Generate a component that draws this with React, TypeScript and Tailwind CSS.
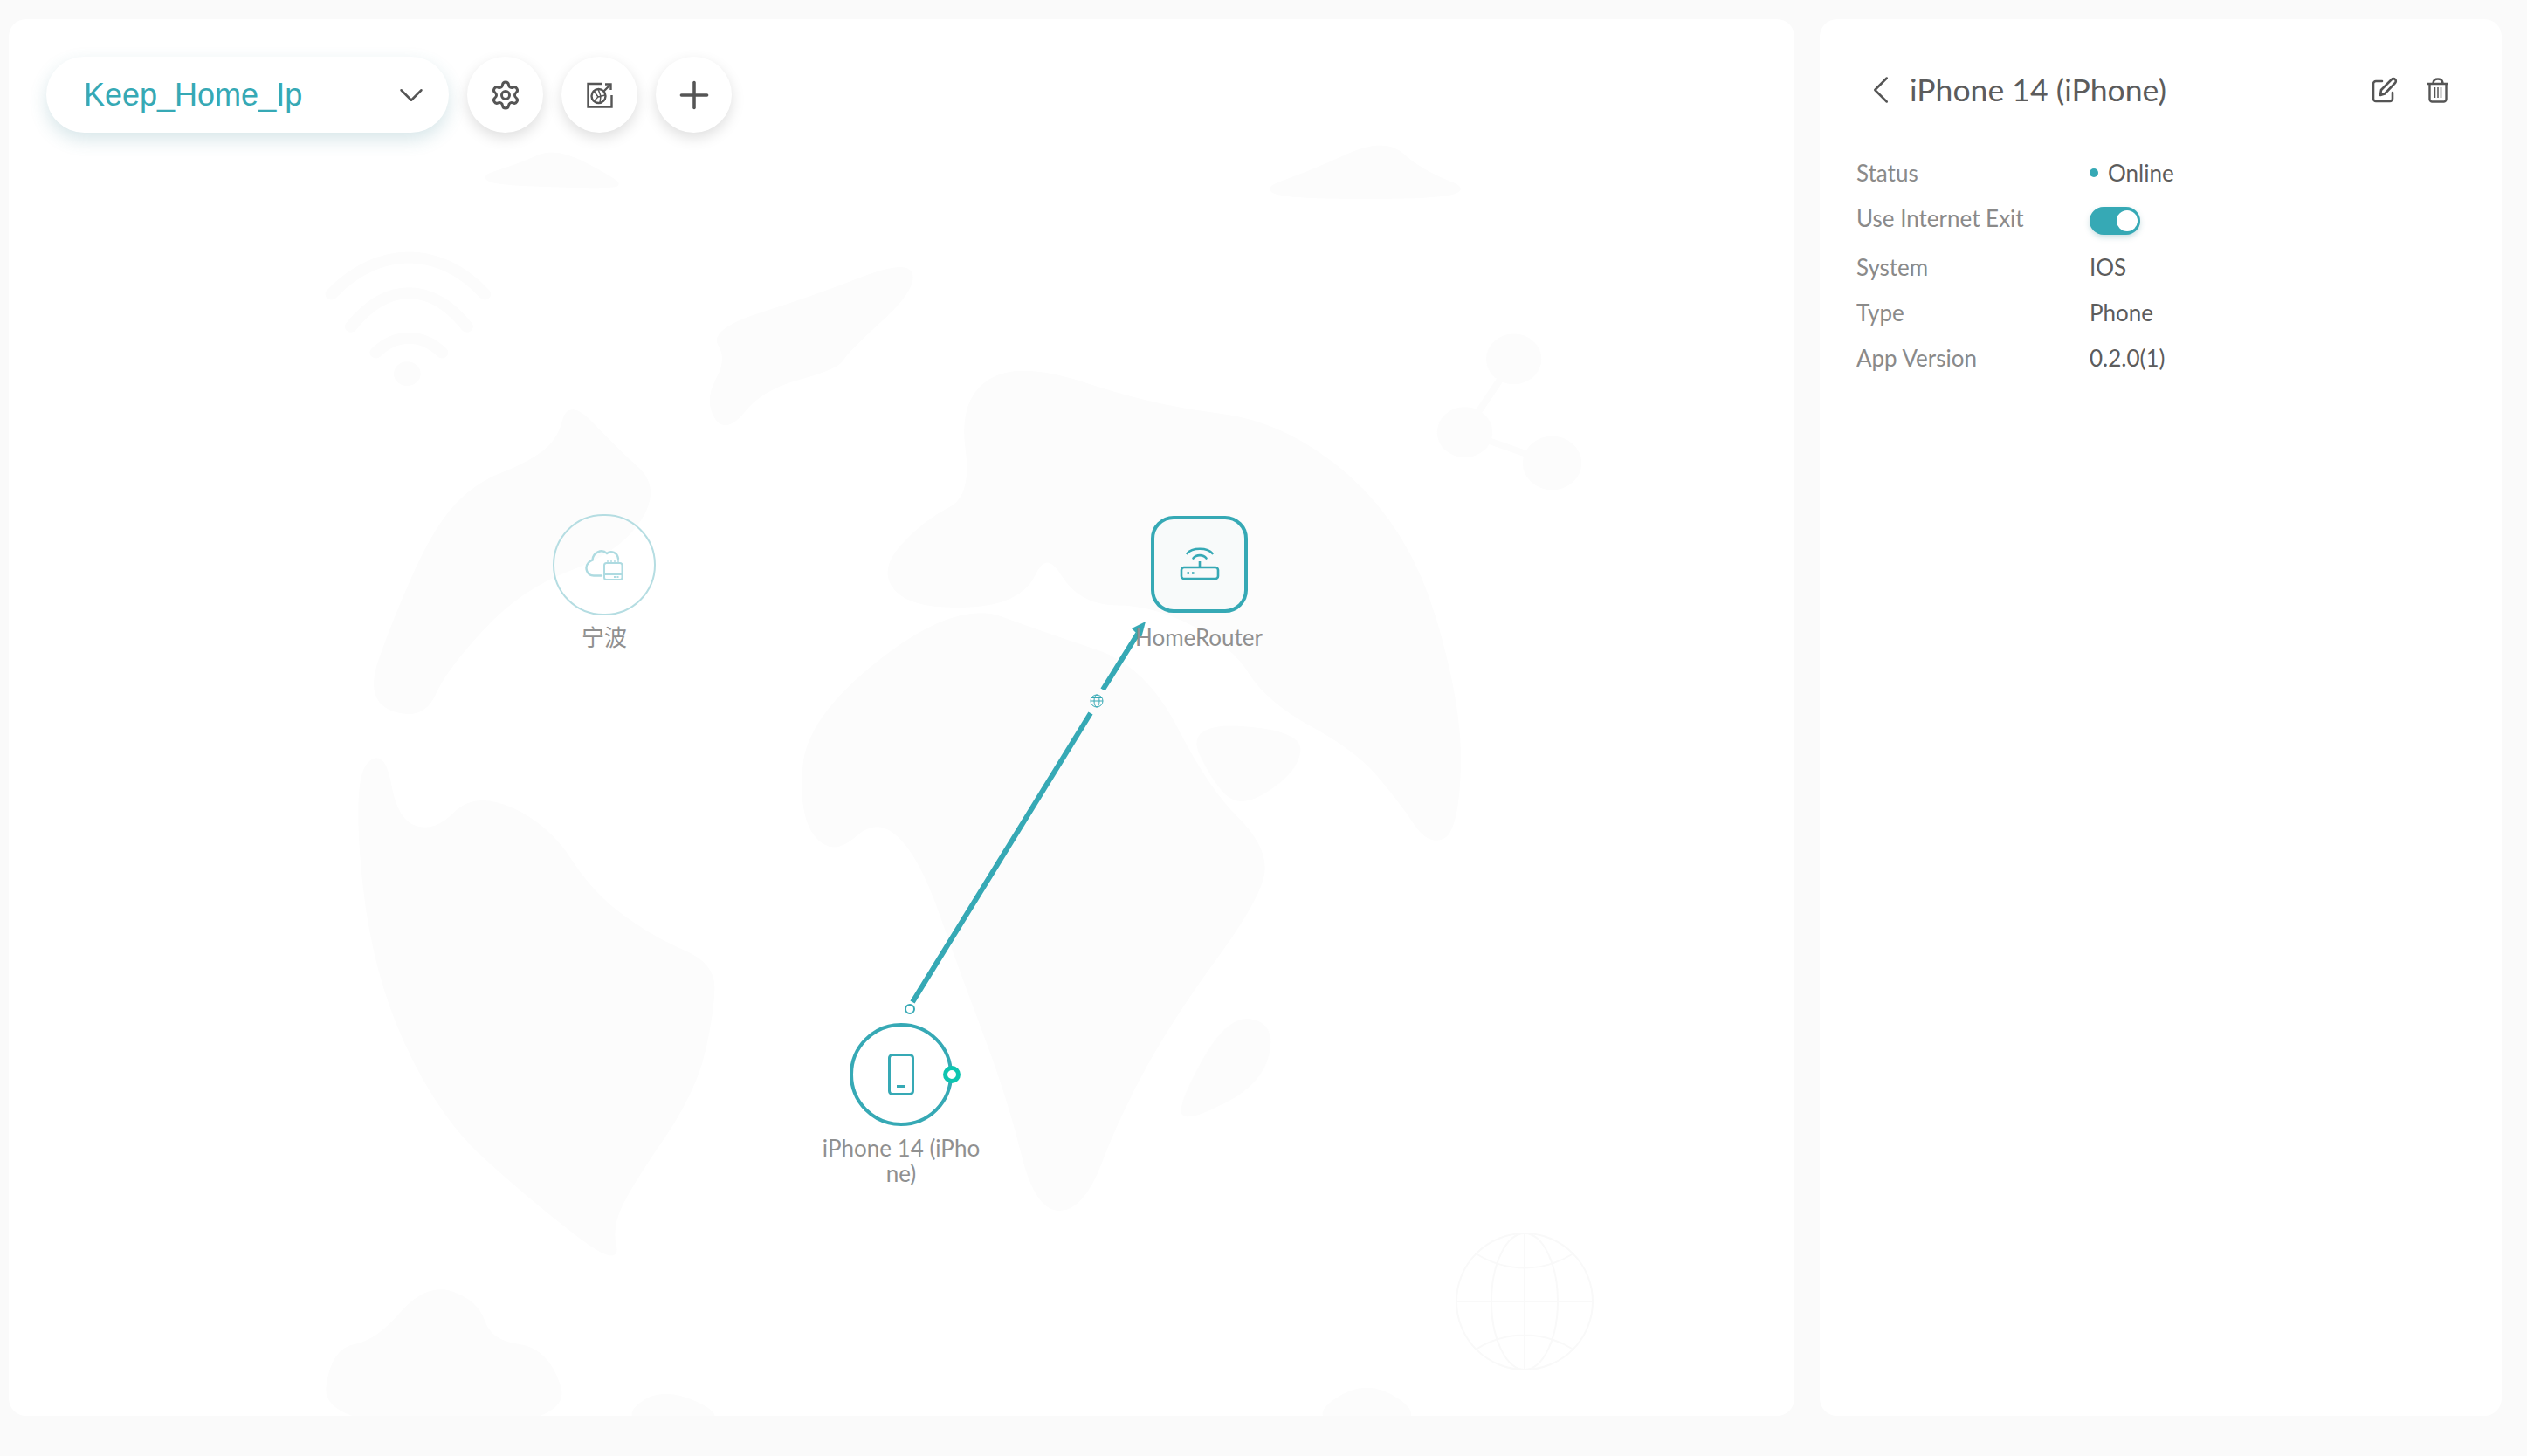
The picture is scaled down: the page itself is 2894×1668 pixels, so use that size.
import { Settings, Plus, ChevronDown, ChevronLeft } from 'lucide-react'

const font = "font-['Lato','Noto_Sans_CJK_SC',sans-serif]"

const rows = [
  { label: 'System', value: 'IOS' },
  { label: 'Type', value: 'Phone' },
  { label: 'App Version', value: '0.2.0(1)' },
]

// rounds a list of points off into a closed blob
function blob(points: number[][]) {
  let d = ''
  points.forEach((p, i) => {
    const next = points[(i + 1) % points.length]
    const mx = (p[0] + next[0]) / 2
    const my = (p[1] + next[1]) / 2
    if (i === 0) {
      const last = points[points.length - 1]
      d += `M${(last[0] + p[0]) / 2} ${(last[1] + p[1]) / 2} `
    }
    d += `Q${p[0]} ${p[1]} ${mx} ${my} `
  })
  return d + 'Z'
}

const continents = [
  [[345, 322], [335, 370], [300, 400], [240, 425], [195, 480], [150, 590], [118, 690], [180, 712], [205, 650], [290, 550], [400, 505], [445, 430], [395, 380]],
  [[105, 790], [135, 750], [150, 840], [195, 855], [240, 805], [320, 845], [370, 930], [440, 985], [505, 1015], [505, 1070], [485, 1170], [410, 1290], [390, 1340], [400, 1385], [300, 1300], [200, 1200], [125, 1020]],
  [[505, 235], [620, 195], [725, 150], [730, 185], [655, 260], [645, 280], [560, 305], [520, 360], [500, 320], [525, 270]],
  [[695, 530], [745, 470], [800, 440], [785, 320], [850, 275], [1000, 330], [1150, 350], [1285, 480], [1345, 700], [1340, 850], [1310, 865], [1280, 815], [1230, 750], [1130, 690], [1090, 620], [1000, 570], [920, 570], [880, 500], [850, 570], [730, 575]],
  [[615, 710], [780, 570], [880, 610], [990, 650], [1060, 800], [1125, 870], [1120, 930], [1020, 1080], [960, 1200], [920, 1315], [870, 1315], [840, 1180], [785, 1020], [740, 880], [690, 830], [640, 880], [605, 830]],
  [[1085, 1080], [1135, 1090], [1120, 1160], [1040, 1205], [1030, 1190]],
  [[1040, 720], [1165, 730], [1160, 775], [1100, 820], [1070, 790]],
  [[232, 52], [290, 32], [330, 12], [395, 50], [400, 58]],
  [[1105, 70], [1180, 40], [1260, 0], [1300, 40], [1370, 70]],
  [[70, 1580], [80, 1490], [130, 1480], [185, 1410], [240, 1430], [255, 1480], [320, 1490], [345, 1580]],
  [[400, 1580], [450, 1535], [530, 1580]],
  [[1170, 1580], [1240, 1525], [1310, 1580]],
]

function WorldMap() {
  return (
    <svg className="absolute inset-0 h-full w-full" viewBox="10 22 2045 1600">
      <g transform="translate(300 160) scale(1.0204 0.931)" fill="#fcfcfc" stroke="#fcfcfc" strokeWidth="6" strokeLinejoin="round">
        {continents.map((c, i) => (
          <path key={i} d={blob(c)} />
        ))}
        <circle cx="1405" cy="270" r="28" />
        <circle cx="1350" cy="360" r="28" />
        <circle cx="1448" cy="398" r="30" />
        <circle cx="163" cy="288" r="12" />
      </g>
      <g transform="translate(300 160) scale(1.0204 0.931)" fill="none" stroke="#fcfcfc" strokeLinecap="round">
        <path d="M1405 270 L1350 360 L1448 398" strokeWidth="8" />
        <path d="M78 190 C130 130 200 130 250 190" strokeWidth="14" />
        <path d="M100 230 C140 175 190 175 230 230" strokeWidth="14" />
        <path d="M128 262 C150 238 180 238 202 262" strokeWidth="14" />
      </g>
      <g fill="none" stroke="#f9f9f9" strokeWidth="2">
        <circle cx="1746" cy="1491" r="78" />
        <ellipse cx="1746" cy="1491" rx="38" ry="78" />
        <path d="M1668 1491 H1824 M1690 1436 C1725 1458 1767 1458 1802 1436 M1690 1546 C1725 1524 1767 1524 1802 1546 M1746 1413 V1569" />
      </g>
    </svg>
  )
}

function CloudIcon() {
  return (
    <svg width="44" height="36" viewBox="0 0 44 36" fill="none" stroke="#aedbe1" strokeWidth="2.4">
      <path d="M19 30.5 H10 C2 30.5 -1 21 4 15.5 C5.5 14 7 13 8.5 12.5 C9 4 19 -1 25 5 C30 1 37 4 38 11" strokeLinecap="round" />
      <rect x="22" y="16" width="20.5" height="19" rx="2.5" strokeWidth="2" />
      <path d="M26 16 V13 M30 16 V13 M34 16 V13 M38 16 V13" strokeWidth="1.4" />
      <path d="M22 29 H42" strokeWidth="2" />
      <path d="M33 32 H40" strokeWidth="2" strokeDasharray="2 1.5" />
    </svg>
  )
}

function RouterIcon() {
  return (
    <svg className="mb-[3px]" width="46" height="40" viewBox="0 0 46 40" fill="none" stroke="#36a9b5" strokeWidth="2.6">
      <path d="M8.5 9 C14 2 32 2 37.5 9" strokeLinecap="round" />
      <path d="M15.5 14.5 C19 10 27 10 30.5 14.5" strokeLinecap="round" />
      <path d="M23 18 V25" />
      <rect x="2" y="25" width="42" height="13" rx="3" />
      <path d="M8.5 31.5 H11 M14 31.5 H16.5" />
    </svg>
  )
}

function ExportIcon() {
  return (
    <svg width="30" height="30" viewBox="0 0 30 30" fill="none" stroke="#555555" strokeWidth="2.4">
      <path d="M17 2 H1.5 V28.5 H28.5 V15" />
      <path d="M19 11 L27 3 M21 2.5 H27.5 V9" />
      <circle cx="13.5" cy="16" r="8" />
      <path d="M8 10 L13 17 L8 22 M13 17 L21 15 M13 8 L16 16 L15 24" strokeWidth="1.5" />
    </svg>
  )
}

function EditIcon() {
  return (
    <svg width="30" height="30" viewBox="0 0 30 30" fill="none" stroke="#555555" strokeWidth="2.6" strokeLinecap="round" strokeLinejoin="round">
      <path d="M12 5 H5 a3 3 0 0 0 -3 3 V25 a3 3 0 0 0 3 3 H21 a3 3 0 0 0 3 -3 V18" />
      <path d="M10 21 L11 15 L23 3 a2.6 2.6 0 0 1 4 4 L15 19.5 Z" />
    </svg>
  )
}

function TrashIcon() {
  return (
    <svg width="26" height="29" viewBox="0 0 26 29" fill="none" stroke="#555555" strokeWidth="2.4">
      <path d="M1 7 H25 M7.5 6 C8 2.5 9.5 1.5 13 1.5 C16.5 1.5 18 2.5 18.5 6" />
      <path d="M3.5 7 V24.5 C3.5 26 4.5 27.5 6 27.5 H20 C21.5 27.5 22.5 26 22.5 24.5 V7" />
      <path d="M9.5 11 V23 M13 11 V23 M16.5 11 V23" strokeWidth="1.5" />
    </svg>
  )
}

function GlobeIcon() {
  return (
    <svg width="16" height="16" viewBox="0 0 16 16" fill="none" stroke="#36a9b5" strokeWidth="1">
      <circle cx="8" cy="8" r="7" />
      <ellipse cx="8" cy="8" rx="3" ry="7" />
      <path d="M1 8 H15 M2 4.5 H14 M2 11.5 H14" />
    </svg>
  )
}

function RoundButton({ children }: { children: React.ReactNode }) {
  return (
    <button className="flex h-[87px] w-[87px] items-center justify-center rounded-full bg-white shadow-[0_6px_16px_rgba(0,0,0,0.13)]">
      {children}
    </button>
  )
}

export default function App() {
  return (
    <div className={`flex h-[1668px] w-[2894px] gap-[29px] bg-[#fafafa] pb-[46px] pl-[10px] pr-[29px] pt-[22px] ${font}`}>
      <div className="relative w-[2045px] overflow-hidden rounded-[20px] bg-white">
        <WorldMap />

        {/* toolbar */}
        <div className="absolute left-[43px] top-[43px] flex gap-[21px]">
          <div className="flex h-[87px] w-[461px] items-center justify-between rounded-full bg-white pl-[43px] pr-[20px] shadow-[0_8px_20px_rgba(54,130,145,0.2)]">
            <span className="font-['Liberation_Sans',sans-serif] text-[36px] text-[#36a9b5]">Keep_Home_Ip</span>
            <ChevronDown size={46} color="#555555" strokeWidth={1.3} />
          </div>
          <RoundButton>
            <Settings size={36} color="#555555" strokeWidth={2} />
          </RoundButton>
          <RoundButton>
            <ExportIcon />
          </RoundButton>
          <RoundButton>
            <Plus size={50} color="#555555" strokeWidth={1.7} />
          </RoundButton>
        </div>

        {/* link between the nodes */}
        <svg className="absolute inset-0 h-full w-full" viewBox="10 22 2045 1600">
          <path d="M1045 1148 L1249 817 M1263 790 L1303 726" stroke="#36a9b5" strokeWidth="6" fill="none" />
          <path d="M1312 712 L1296 720 L1307 731 Z" fill="#36a9b5" />
          <circle cx="1042" cy="1156" r="5" fill="white" stroke="#36a9b5" strokeWidth="2" />
        </svg>
        <div className="absolute left-[1238px] top-[773px] flex h-[16px] w-[16px] items-center justify-center">
          <GlobeIcon />
        </div>

        {/* nodes */}
        <div className="absolute left-[623px] top-[567px] flex h-[116px] w-[118px] items-center justify-center rounded-full border-2 border-[#b5dde2]">
          <CloudIcon />
        </div>
        <div className="absolute left-[582px] top-[693px] w-[200px] text-center text-[26px] leading-[30px] text-[#909090]">宁波</div>

        <div className="absolute left-[1308px] top-[569px] flex h-[111px] w-[111px] items-center justify-center rounded-[26px] border-[4px] border-[#36a9b5] bg-[#f8fafa]">
          <RouterIcon />
        </div>
        <div className="absolute left-[1263px] top-[693px] w-[200px] text-center text-[26px] leading-[30px] text-[#909090]">HomeRouter</div>

        <div className="absolute left-[963px] top-[1150px] flex h-[118px] w-[118px] items-center justify-center rounded-full border-[4px] border-[#36a9b5]">
          <div className="relative h-[48px] w-[30px] rounded-[5px] border-[3px] border-[#36a9b5]">
            <div className="absolute bottom-[6px] left-[7px] h-[3px] w-[9px] bg-[#36a9b5]" />
          </div>
        </div>
        <div className="absolute left-[1070px] top-[1199px] h-[20px] w-[20px] rounded-full border-[5px] border-[#0ec5b0] bg-white" />
        <div className="absolute left-[929px] top-[1279px] w-[186px] break-all text-center text-[26px] leading-[29px] text-[#909090]">iPhone 14 (iPhone)</div>
      </div>

      {/* device detail */}
      <div className="w-[781px] rounded-[20px] bg-white pl-[42px] pt-[65px]">
        <div className="flex h-[32px] items-center">
          <ChevronLeft size={54} color="#555555" strokeWidth={1.1} className="ml-[1px]" />
          <span className="ml-[6px] text-[35.6px] leading-[32px] text-[#5c5c5c]">iPhone 14 (iPhone)</span>
          <div className="ml-auto mr-[60px] flex items-center gap-[33px]">
            <EditIcon />
            <TrashIcon />
          </div>
        </div>
        <div className="mt-[53px] flex flex-col text-[26px] leading-[52px]">
          <div className="flex">
            <span className="w-[267px] text-[#8a8a8a]">Status</span>
            <span className="flex items-center text-[#5c5c5c]">
              <span className="mr-[11px] h-[10px] w-[10px] rounded-full bg-[#36a9b5]" />
              Online
            </span>
          </div>
          <div className="flex h-[56px]">
            <span className="w-[267px] text-[#8a8a8a]">Use Internet Exit</span>
            <div className="relative mt-[13px] h-[32px] w-[58px] rounded-full bg-[#36a9b5] shadow-[0_3px_6px_rgba(54,130,145,0.25)]">
              <div className="absolute right-[3px] top-[4px] h-[24px] w-[24px] rounded-full bg-white" />
            </div>
          </div>
          {rows.map((row) => (
            <div key={row.label} className="flex">
              <span className="w-[267px] text-[#8a8a8a]">{row.label}</span>
              <span className="text-[#5c5c5c]">{row.value}</span>
            </div>
          ))}
        </div>
      </div>
    </div>
  )
}
